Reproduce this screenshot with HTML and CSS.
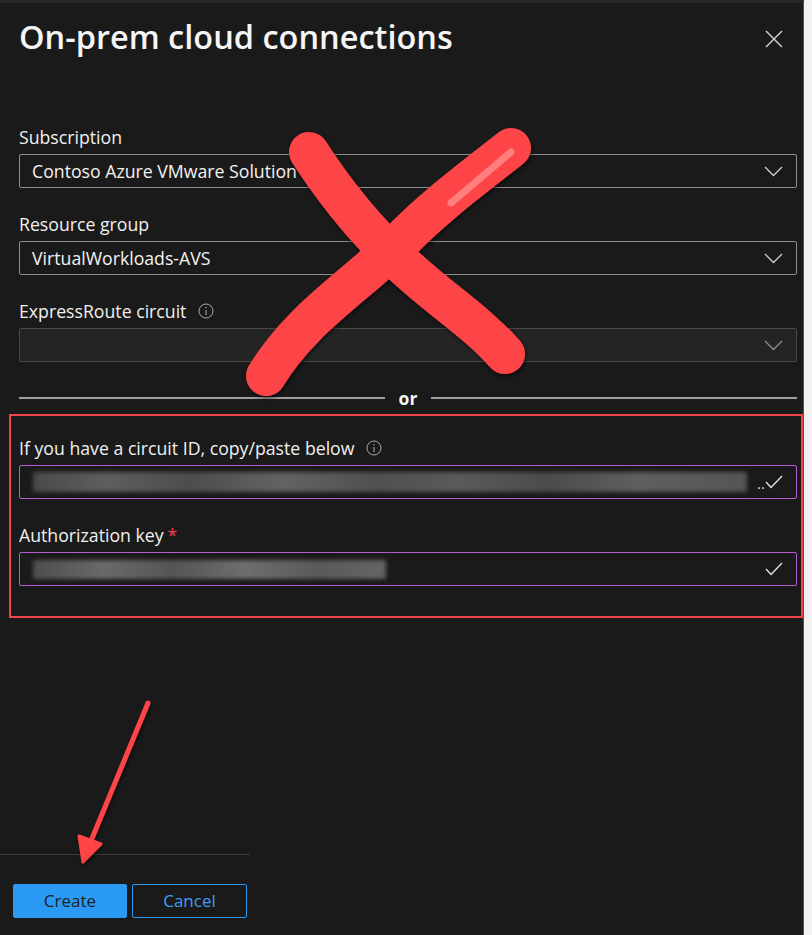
FILE: index.html
```html
<!DOCTYPE html>
<html lang="en">
<head>
<meta charset="utf-8">
<title>On-prem cloud connections</title>
<link rel="stylesheet" href="styles.css">
</head>
<body>
<div class="panel">
  <header class="head">
    <h1 class="title">On-prem cloud connections</h1>
    <button class="close" aria-label="Close">
      <svg width="18" height="18" viewBox="0 0 18 18"><path d="M1 1 L17 17 M17 1 L1 17" stroke="#d6d6d6" stroke-width="1.4" fill="none"/></svg>
    </button>
  </header>

  <div class="form">
    <div class="field">
      <label class="label">Subscription</label>
      <div class="select">
        <span class="value">Contoso Azure VMware Solution</span>
        <svg class="chev" width="19" height="11" viewBox="0 0 19 11"><path d="M1 1 L9.5 9.5 L18 1" stroke="#cfcfcf" stroke-width="1.3" fill="none"/></svg>
      </div>
    </div>
    <div class="field">
      <label class="label">Resource group</label>
      <div class="select">
        <span class="value">VirtualWorkloads-AVS</span>
        <svg class="chev" width="19" height="11" viewBox="0 0 19 11"><path d="M1 1 L9.5 9.5 L18 1" stroke="#cfcfcf" stroke-width="1.3" fill="none"/></svg>
      </div>
    </div>
    <div class="field">
      <label class="label">ExpressRoute circuit
        <svg class="info" width="16" height="16" viewBox="0 0 16 16"><circle cx="8" cy="8" r="7" stroke="#a8a8a8" stroke-width="1" fill="none"/><path d="M8 7 V12" stroke="#a8a8a8" stroke-width="1.1"/><circle cx="8" cy="4.7" r="0.8" fill="#a8a8a8"/></svg>
      </label>
      <div class="select disabled">
        <span class="value"></span>
        <svg class="chev" width="19" height="11" viewBox="0 0 19 11"><path d="M1 1 L9.5 9.5 L18 1" stroke="#8a8a8a" stroke-width="1.3" fill="none"/></svg>
      </div>
    </div>

    <div class="divider"><span class="line"></span><span class="or">or</span><span class="line"></span></div>

    <div class="highlight">
      <div class="field">
        <label class="label">If you have a circuit ID, copy/paste below
          <svg class="info" width="16" height="16" viewBox="0 0 16 16"><circle cx="8" cy="8" r="7" stroke="#a8a8a8" stroke-width="1" fill="none"/><path d="M8 7 V12" stroke="#a8a8a8" stroke-width="1.1"/><circle cx="8" cy="4.7" r="0.8" fill="#a8a8a8"/></svg>
        </label>
        <div class="input">
          <span class="blur long"></span>
          <span class="dots">..</span>
          <svg class="check" width="18" height="14" viewBox="0 0 18 14"><path d="M1 7 L6 12.5 L17 1" stroke="#e6e6e6" stroke-width="1.3" fill="none"/></svg>
        </div>
      </div>
      <div class="field">
        <label class="label">Authorization key <span class="req">*</span></label>
        <div class="input">
          <span class="blur short"></span>
          <svg class="check" width="18" height="14" viewBox="0 0 18 14"><path d="M1 7 L6 12.5 L17 1" stroke="#e6e6e6" stroke-width="1.3" fill="none"/></svg>
        </div>
      </div>
    </div>
  </div>

  <footer class="foot">
    <div class="actions">
      <button class="btn primary">Create</button>
      <button class="btn secondary">Cancel</button>
    </div>
  </footer>

  <svg class="annot" width="804" height="935" viewBox="0 0 804 935">
    <defs>
      <filter id="sh" x="-20%" y="-20%" width="140%" height="140%">
        <feDropShadow dx="1" dy="2" stdDeviation="2" flood-color="#000" flood-opacity="0.6"/>
      </filter>
    </defs>
    <g filter="url(#sh)" stroke="#fd4446" stroke-linecap="round" fill="none">
      <path d="M309 152 C340 200 372 236 400 262 C440 300 475 320 505 354" stroke-width="40"/>
      <path d="M511 148 C470 180 430 210 398 244 C350 290 300 320 266 376" stroke-width="40"/>
      <path d="M148 703 L86 853" stroke-width="5"/>
    </g>
    <path d="M451 203 L511 152" stroke="#ff8c8c" stroke-opacity="0.8" stroke-width="7" stroke-linecap="round"/>
    <path d="M83 862 L79 836 L101 844 Z" fill="#fd4446" stroke="#fd4446" stroke-width="3" stroke-linejoin="round" filter="url(#sh)"/>
  </svg>
</div>
</body>
</html>
```
FILE: styles.css
```css
* { box-sizing: border-box; }
html, body { margin: 0; padding: 0; }
body {
  background: #f2f2f2;
  font-family: "Open Sans", "Noto Sans", "Liberation Sans", sans-serif;
  color: #f3f2f1;
}
.panel {
  position: relative;
  width: 804px;
  height: 935px;
  background: #1b1a1a;
  border-top: 3px solid #262626;
  border-right: 1px solid #555;
  display: flex;
  flex-direction: column;
}
.head {
  display: flex;
  justify-content: space-between;
  align-items: flex-start;
  padding: 12px 20px 0 19px;
  height: 122px;
}
.title {
  margin: 0;
  font-size: 32.5px;
  font-weight: 600;
  line-height: 44px;
  letter-spacing: 0;
  color: #f5f5f5;
}
.close {
  margin-top: 15px;
  background: none;
  border: 0;
  padding: 0;
  width: 18px;
  height: 18px;
  display: flex;
}
.form {
  padding: 0 6px 0 19px;
  display: flex;
  flex-direction: column;
}
.field { display: flex; flex-direction: column; }
.field + .field { margin-top: 24px; }
.label {
  font-size: 17.7px;
  line-height: 24px;
  height: 24px;
  margin-bottom: 5px;
  display: flex;
  align-items: center;
  gap: 12px;
  color: #f0f0f0;
}
.label .req { color: #f1434a; margin-left: -8px; }
.info { flex: none; }
.select, .input {
  height: 34px;
  border: 1px solid #8f8d8b;
  border-radius: 2px;
  display: flex;
  align-items: center;
  padding: 0 13px 0 12px;
  position: relative;
}
.select .value {
  flex: 1;
  font-size: 17.7px;
  color: #f3f2f1;
}
.select.disabled {
  background: #252424;
  border-color: #4a4847;
}
.divider {
  display: flex;
  align-items: center;
  margin-top: 23px;
  height: 26px;
  gap: 14px;
}
.divider .line {
  flex: 1;
  height: 2px;
  background: #a19f9d;
}
.divider .or {
  font-size: 17.5px;
  font-weight: 700;
  color: #f5f5f5;
  line-height: 20px;
}
.highlight {
  margin: 3px -6px 0 -10px;
  border: 2px solid #f0434a;
  padding: 20px 4px 30px 8px;
}
.input {
  border-color: #b65ad6;
}
.blur {
  height: 20px;
  background: linear-gradient(90deg, #4a4a4a, #5e5e5e 10%, #4d4d4d 22%, #636363 35%, #505050 48%, #5a5a5a 60%, #4b4b4b 72%, #5f5f5f 85%, #555);
  filter: blur(2px);
  border-radius: 2px;
}
.blur.long { width: 720px; margin-left: 1px; }
.blur.short { width: 353px; margin-left: 1px; height: 19px; background: linear-gradient(90deg, #4e4e4e, #6a6a6a 20%, #555 40%, #6e6e6e 60%, #5a5a5a 80%, #656565); }
.dots {
  font-size: 15px;
  color: #d8d8d8;
  margin-left: 10px;
  line-height: 14px;
  align-self: flex-end;
  margin-bottom: 8px;
}
.check { margin-left: auto; flex: none; }
.foot {
  margin-top: auto;
  width: 250px;
  border-top: 1px solid #3b3a39;
  padding: 29px 0 17px 13px;
}
.actions { display: flex; gap: 5px; }
.btn {
  height: 34px;
  border-radius: 2px;
  font-family: "Open Sans", "Noto Sans", sans-serif;
  font-size: 17px;
  padding: 0;
  line-height: 30px;
}
.btn.primary {
  width: 114px;
  background: #2a9af5;
  border: 1px solid #2a9af5;
  color: #1e1e1e;
}
.btn.secondary {
  width: 115px;
  background: transparent;
  border: 1px solid #2a9af5;
  color: #3aa0f5;
}
.annot {
  position: absolute;
  left: 0;
  top: -3px;
  pointer-events: none;
}
```
